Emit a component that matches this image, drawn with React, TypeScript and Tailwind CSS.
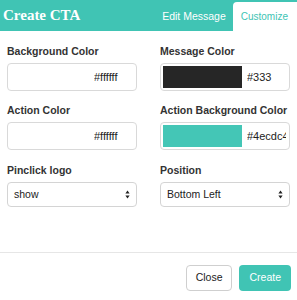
import React from "react";

const TEAL = "#40c4b4";

function ColorField({ label, swatch, value }: { label: string; swatch: string; value: string }) {
  return (
    <div className="flex flex-col">
      <div className="text-[10.5px] leading-[12px] font-bold text-[#333] mb-[6px]">{label}</div>
      <div className="flex items-center h-[28px] w-[130px] border border-[#d9d9d9] rounded-[4px] p-[2px] bg-white">
        <div className="h-[22px] w-[79px] shrink-0" style={{ backgroundColor: swatch }} />
        <div className="ml-[5px] w-[39px] overflow-hidden whitespace-nowrap text-[11px] text-[#222] leading-[22px]">{value}</div>
      </div>
    </div>
  );
}

function Arrows() {
  return (
    <svg width="5" height="9" viewBox="0 0 5 9" className="shrink-0">
      <path d="M2.5 0.5 L4.6 3.5 L0.4 3.5 Z" fill="#222" />
      <path d="M2.5 8.5 L4.6 5.5 L0.4 5.5 Z" fill="#222" />
    </svg>
  );
}

function SelectField({ label, value }: { label: string; value: string }) {
  return (
    <div className="flex flex-col">
      <div className="text-[10.5px] leading-[12px] font-bold text-[#333] mb-[6px]">{label}</div>
      <div className="flex items-center justify-between h-[25px] w-[130px] border border-[#d4d4d4] rounded-[4px] pl-[6px] pr-[6px] bg-white">
        <span className="text-[10.5px] text-[#222]">{value}</span>
        <Arrows />
      </div>
    </div>
  );
}

export default function App() {
  return (
    <div className="w-[297px] h-[300px] bg-white overflow-hidden" style={{ fontFamily: '"Liberation Sans", Arial, sans-serif' }}>
      <div className="h-[31px] flex items-end justify-between" style={{ backgroundColor: TEAL }}>
        <div
          className="pl-[3px] self-center text-white font-bold text-[15px] leading-[18px] -mt-[1px]"
          style={{ fontFamily: '"Liberation Serif", "DejaVu Serif", serif' }}
        >
          Create CTA
        </div>
        <div className="flex items-end">
          <div className="h-[29px] flex items-center px-[7px] text-white text-[10.5px]">Edit Message</div>
          <div className="h-[29px] flex items-center pl-[8px] pr-[9px] bg-white rounded-tl-[4px] text-[10px]" style={{ color: TEAL }}>
            Customize
          </div>
        </div>
      </div>
      <div className="pt-[14px] px-[7px] h-[221px]">
        <div className="grid grid-cols-[130px_130px] gap-x-[23px]">
          <ColorField label="Background Color" swatch="#ffffff" value="#ffffff" />
          <ColorField label="Message Color" swatch="#262626" value="#333" />
          <div className="mt-[13px]">
            <ColorField label="Action Color" swatch="#ffffff" value="#ffffff" />
          </div>
          <div className="mt-[13px]">
            <ColorField label="Action Background Color" swatch="#44c6b6" value="#4ecdc4" />
          </div>
          <div className="mt-[14px]">
            <SelectField label="Pinclick logo" value="show" />
          </div>
          <div className="mt-[14px]">
            <SelectField label="Position" value="Bottom Left" />
          </div>
        </div>
      </div>
      <div className="h-[1px] bg-[#e6e6e6]" />
      <div className="flex justify-end gap-[7px] pt-[12px] pr-[6px]">
        <button className="h-[26px] px-[9px] border border-[#cfcfcf] rounded-[4px] bg-white text-[10.5px] text-[#222]">Close</button>
        <button className="h-[26px] px-[10px] rounded-[4px] text-[10.5px] text-white" style={{ backgroundColor: TEAL }}>Create</button>
      </div>
    </div>
  );
}
